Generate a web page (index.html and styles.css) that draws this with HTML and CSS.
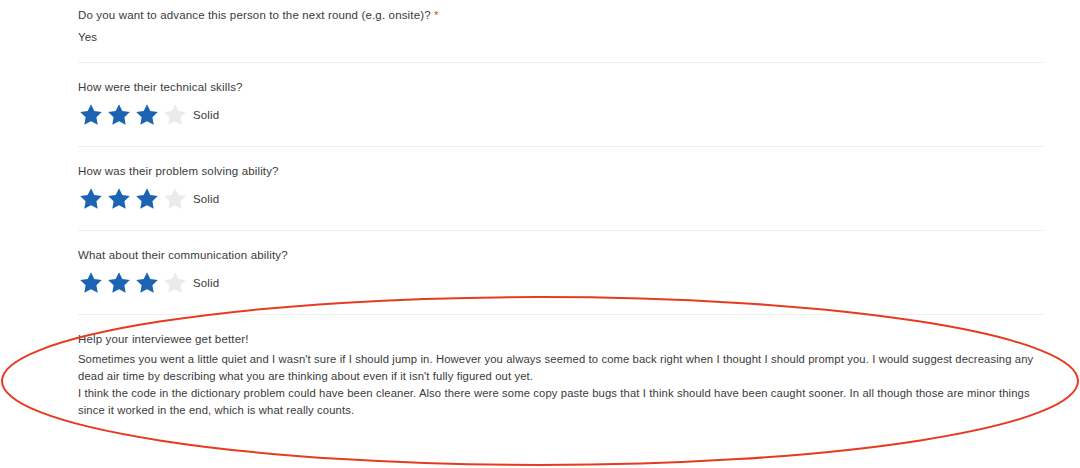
FILE: index.html
```html
<!DOCTYPE html>
<html lang="en">
<head>
<meta charset="utf-8">
<title>Interview feedback</title>
<link rel="stylesheet" href="styles.css">
</head>
<body>
<div class="page">
  <div class="form">
    <section class="field first">
      <div class="label">Do you want to advance this person to the next round (e.g. onsite)? <span class="req">*</span></div>
      <div class="answer">Yes</div>
    </section>
    <section class="field">
      <div class="label">How were their technical skills?</div>
      <div class="rating">
        <svg class="star on" viewBox="0 0 24 24"><polygon points="12,2 15.09,8.26 22,9.27 17,14.14 18.18,21.02 12,17.77 5.82,21.02 7,14.14 2,9.27 8.91,8.26"/></svg>
        <svg class="star on" viewBox="0 0 24 24"><polygon points="12,2 15.09,8.26 22,9.27 17,14.14 18.18,21.02 12,17.77 5.82,21.02 7,14.14 2,9.27 8.91,8.26"/></svg>
        <svg class="star on" viewBox="0 0 24 24"><polygon points="12,2 15.09,8.26 22,9.27 17,14.14 18.18,21.02 12,17.77 5.82,21.02 7,14.14 2,9.27 8.91,8.26"/></svg>
        <svg class="star off" viewBox="0 0 24 24"><polygon points="12,2 15.09,8.26 22,9.27 17,14.14 18.18,21.02 12,17.77 5.82,21.02 7,14.14 2,9.27 8.91,8.26"/></svg>
        <span class="rating-text">Solid</span>
      </div>
    </section>
    <section class="field">
      <div class="label">How was their problem solving ability?</div>
      <div class="rating">
        <svg class="star on" viewBox="0 0 24 24"><polygon points="12,2 15.09,8.26 22,9.27 17,14.14 18.18,21.02 12,17.77 5.82,21.02 7,14.14 2,9.27 8.91,8.26"/></svg>
        <svg class="star on" viewBox="0 0 24 24"><polygon points="12,2 15.09,8.26 22,9.27 17,14.14 18.18,21.02 12,17.77 5.82,21.02 7,14.14 2,9.27 8.91,8.26"/></svg>
        <svg class="star on" viewBox="0 0 24 24"><polygon points="12,2 15.09,8.26 22,9.27 17,14.14 18.18,21.02 12,17.77 5.82,21.02 7,14.14 2,9.27 8.91,8.26"/></svg>
        <svg class="star off" viewBox="0 0 24 24"><polygon points="12,2 15.09,8.26 22,9.27 17,14.14 18.18,21.02 12,17.77 5.82,21.02 7,14.14 2,9.27 8.91,8.26"/></svg>
        <span class="rating-text">Solid</span>
      </div>
    </section>
    <section class="field">
      <div class="label">What about their communication ability?</div>
      <div class="rating">
        <svg class="star on" viewBox="0 0 24 24"><polygon points="12,2 15.09,8.26 22,9.27 17,14.14 18.18,21.02 12,17.77 5.82,21.02 7,14.14 2,9.27 8.91,8.26"/></svg>
        <svg class="star on" viewBox="0 0 24 24"><polygon points="12,2 15.09,8.26 22,9.27 17,14.14 18.18,21.02 12,17.77 5.82,21.02 7,14.14 2,9.27 8.91,8.26"/></svg>
        <svg class="star on" viewBox="0 0 24 24"><polygon points="12,2 15.09,8.26 22,9.27 17,14.14 18.18,21.02 12,17.77 5.82,21.02 7,14.14 2,9.27 8.91,8.26"/></svg>
        <svg class="star off" viewBox="0 0 24 24"><polygon points="12,2 15.09,8.26 22,9.27 17,14.14 18.18,21.02 12,17.77 5.82,21.02 7,14.14 2,9.27 8.91,8.26"/></svg>
        <span class="rating-text">Solid</span>
      </div>
    </section>
    <section class="field last">
      <div class="label">Help your interviewee get better!</div>
      <div class="feedback">Sometimes you went a little quiet and I wasn't sure if I should jump in. However you always seemed to come back right when I thought I should prompt you. I would suggest decreasing any dead air time by describing what you are thinking about even if it isn't fully figured out yet.<br>I think the code in the dictionary problem could have been cleaner. Also there were some copy paste bugs that I think should have been caught sooner. In all though those are minor things since it worked in the end, which is what really counts.</div>
    </section>
  </div>
  <svg class="highlight" viewBox="0 0 1080 468" width="1080" height="468">
    <ellipse cx="540" cy="381" rx="538" ry="84" />
  </svg>
</div>
</body>
</html>
```

FILE: styles.css
```css
html, body {
  margin: 0;
  padding: 0;
  background: #ffffff;
}

.page {
  position: relative;
  width: 1080px;
  height: 468px;
  overflow: hidden;
}

.form {
  margin-left: 78px;
  width: 966px;
  font-family: "Liberation Sans", Arial, sans-serif;
  font-size: 11.5px;
  letter-spacing: 0.15px;
  color: #3a3a3a;
}

.field {
  padding: 16px 0 18px;
  border-bottom: 1px solid #f0f0f0;
}

.field.first {
  padding-top: 7px;
  padding-bottom: 17px;
}

.field.last {
  border-bottom: none;
}

.label {
  line-height: 16px;
  height: 16px;
}

.req {
  color: #d9453b;
}

.answer {
  margin-top: 6px;
  line-height: 16px;
}

.rating {
  margin-top: 7px;
  display: flex;
  align-items: center;
  gap: 2px;
  height: 26px;
}

.star {
  width: 26px;
  height: 26px;
  display: block;
}

.star.on polygon {
  fill: #1d63b4;
}

.star.off polygon {
  fill: #ebebeb;
}

.rating-text {
  margin-left: 3px;
  line-height: 16px;
}

.feedback {
  margin-top: 4px;
  font-size: 11.25px;
  letter-spacing: 0.12px;
  line-height: 17px;
}

.highlight {
  position: absolute;
  left: 0;
  top: 0;
  pointer-events: none;
}

.highlight ellipse {
  fill: none;
  stroke: #e83a20;
  stroke-width: 2;
}
```
